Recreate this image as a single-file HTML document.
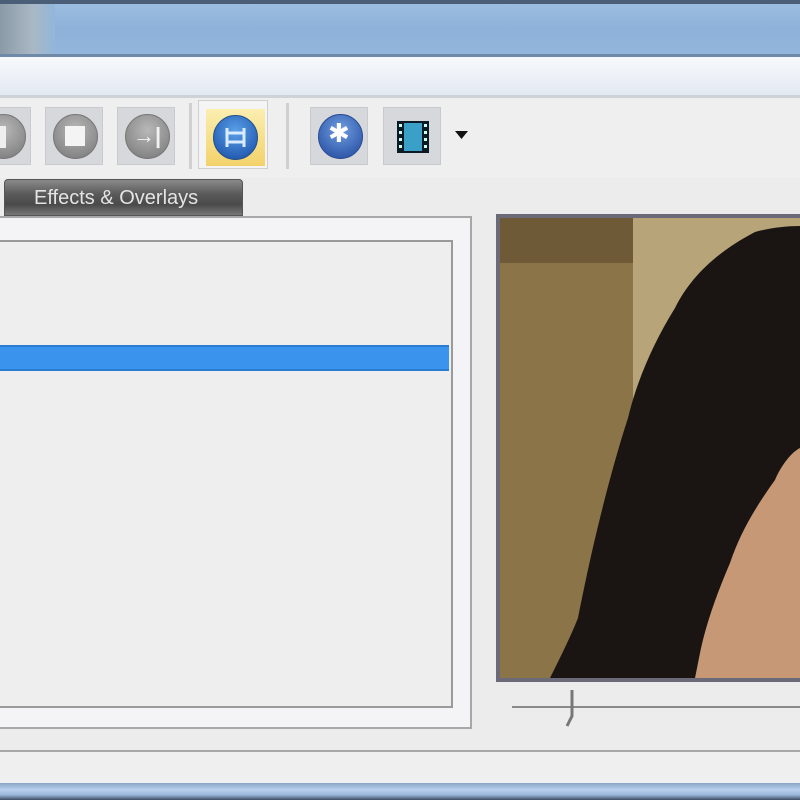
<!DOCTYPE html>
<html><head><meta charset="utf-8"><style>
*{margin:0;padding:0;box-sizing:border-box}
body{width:800px;height:800px;overflow:hidden;background:#ececec;position:relative;font-family:"Liberation Sans",sans-serif}
.a{position:absolute}
.btn{position:absolute;top:107px;width:58px;height:58px;background:#d6d8dc;border:1px solid #c8cacd}
.circ{position:absolute;left:7px;top:6px;width:45px;height:45px;border-radius:50%;background:radial-gradient(circle at 50% 35%,#b8b8b8,#8a8a8a 70%,#707070);border:1px solid #777}
</style></head><body>
<div class="a" style="left:0;top:0;width:800px;height:4px;background:#4a5e78"></div>
<div class="a" style="left:0;top:4px;width:800px;height:51px;background:linear-gradient(#9bbde0,#8db1d8 50%,#93b6dc)"></div>
<div class="a" style="left:0;top:4px;width:55px;height:51px;background:linear-gradient(90deg,#8a9aa6,#a9b8c4 60%,#93b6dc)"></div>
<div class="a" style="left:0;top:54px;width:800px;height:3px;background:#6f8aa8"></div>
<div class="a" style="left:0;top:57px;width:800px;height:38px;background:linear-gradient(#f7f9fc,#e3e9f2)"></div>
<div class="a" style="left:0;top:95px;width:800px;height:3px;background:#cfd3d8"></div>
<div class="a" style="left:0;top:98px;width:800px;height:80px;background:#efefef"></div>
<div class="btn" style="left:-27px"><div class="circ"></div><div class="a" style="left:26px;top:18px;width:6px;height:22px;background:#eee"></div></div>
<div class="btn" style="left:45px"><div class="circ"></div><div class="a" style="left:19px;top:18px;width:20px;height:20px;background:#f4f4f4"></div></div>
<div class="btn" style="left:117px"><div class="circ"></div><div class="a" style="left:15px;top:17px;font-size:22px;font-weight:bold;color:#f2f2f2;line-height:1">→|</div></div>
<div class="a" style="left:189px;top:103px;width:3px;height:66px;background:#d0d0d0"></div>
<div class="a" style="left:198px;top:100px;width:70px;height:69px;border:1px solid #cfcfcf;background:#f4f4f4"></div>
<div class="a" style="left:206px;top:109px;width:59px;height:57px;background:linear-gradient(#fbeeb0,#f3d26a)"></div>
<div class="a" style="left:213px;top:115px;width:45px;height:45px;border-radius:50%;background:radial-gradient(circle at 50% 35%,#5aa0e8,#2a63b8 70%,#1d4a92);border:1px solid #24508e"></div>
<svg class="a" style="left:223px;top:125px" width="25" height="25"><path d="M4 3v19M21 3v19M4 8h17M4 17h17" stroke="#d8ebff" stroke-width="3" fill="none"/></svg>
<div class="a" style="left:286px;top:103px;width:3px;height:66px;background:#d0d0d0"></div>
<div class="btn" style="left:310px"><div class="circ" style="background:radial-gradient(circle at 50% 35%,#6f9ee0,#3760b0 70%,#2a4c94);border-color:#2a4c94"></div><div class="a" style="left:17px;top:12px;font-size:26px;color:#fff;line-height:1">✱</div></div>
<div class="btn" style="left:383px"><svg class="a" style="left:12px;top:12px" width="34" height="34"><rect x="1" y="1" width="32" height="32" fill="#0c1a26"/><rect x="8" y="3" width="18" height="28" fill="#3aa0c8"/><g fill="#cfe"><rect x="3" y="4" width="3" height="3"/><rect x="3" y="11" width="3" height="3"/><rect x="3" y="18" width="3" height="3"/><rect x="3" y="25" width="3" height="3"/><rect x="28" y="4" width="3" height="3"/><rect x="28" y="11" width="3" height="3"/><rect x="28" y="18" width="3" height="3"/><rect x="28" y="25" width="3" height="3"/></g></svg></div>
<svg class="a" style="left:455px;top:131px" width="13" height="8"><path d="M0 0h13L6.5 8z" fill="#111"/></svg>
<div class="a" style="left:4px;top:179px;width:239px;height:37px;border-radius:4px 4px 0 0;background:linear-gradient(#8a8a8a,#5a5a5a 40%,#4a4a4a 70%,#777);border:1px solid #555;color:#e4e4e4;font-size:20px;line-height:36px;padding-left:29px">Effects &amp; Overlays</div>
<div class="a" style="left:-3px;top:216px;width:475px;height:513px;background:#f4f4f6;border:2px solid #a8a8a8;border-left:none"></div>
<div class="a" style="left:-3px;top:240px;width:456px;height:468px;background:#eeeeee;border:2px solid #9a9a9a;border-left:none"></div>
<div class="a" style="left:0;top:345px;width:449px;height:26px;background:#3a94ee;border-top:2px solid #2a7cd0;border-bottom:2px solid #2a7cd0"></div>
<div class="a" style="left:496px;top:214px;width:310px;height:468px;background:#6a6a78"></div>
<svg class="a" style="left:500px;top:218px" width="300" height="460" viewBox="0 0 300 460">
<rect width="300" height="460" fill="#b7a479"/>
<rect width="133" height="460" fill="#8a7448"/>
<rect width="133" height="45" fill="#6e5a36"/>
<path d="M300 8C285 8 270 10 255 14C215 35 190 60 175 90C150 130 135 170 128 200C115 240 105 280 100 300C90 340 82 380 78 400C70 420 60 440 50 460H300Z" fill="#1a1512"/>
<path d="M300 230C290 235 280 250 275 262C255 290 240 315 230 345C215 380 205 410 200 435L195 460H300Z" fill="#c69876"/>
</svg>
<div class="a" style="left:512px;top:706px;width:290px;height:2px;background:#8a8a8a"></div>
<svg class="a" style="left:564px;top:690px" width="16" height="40"><path d="M8 0v26l-5 10" stroke="#777" stroke-width="3" fill="none"/></svg>
<div class="a" style="left:0;top:750px;width:800px;height:2px;background:#a8a8a8"></div>
<div class="a" style="left:0;top:752px;width:800px;height:31px;background:#efefef"></div>
<div class="a" style="left:0;top:783px;width:800px;height:17px;background:linear-gradient(#8aa6c6,#b9cfee 40%,#9ab6da 70%,#3c4c62)"></div>
</body></html>
